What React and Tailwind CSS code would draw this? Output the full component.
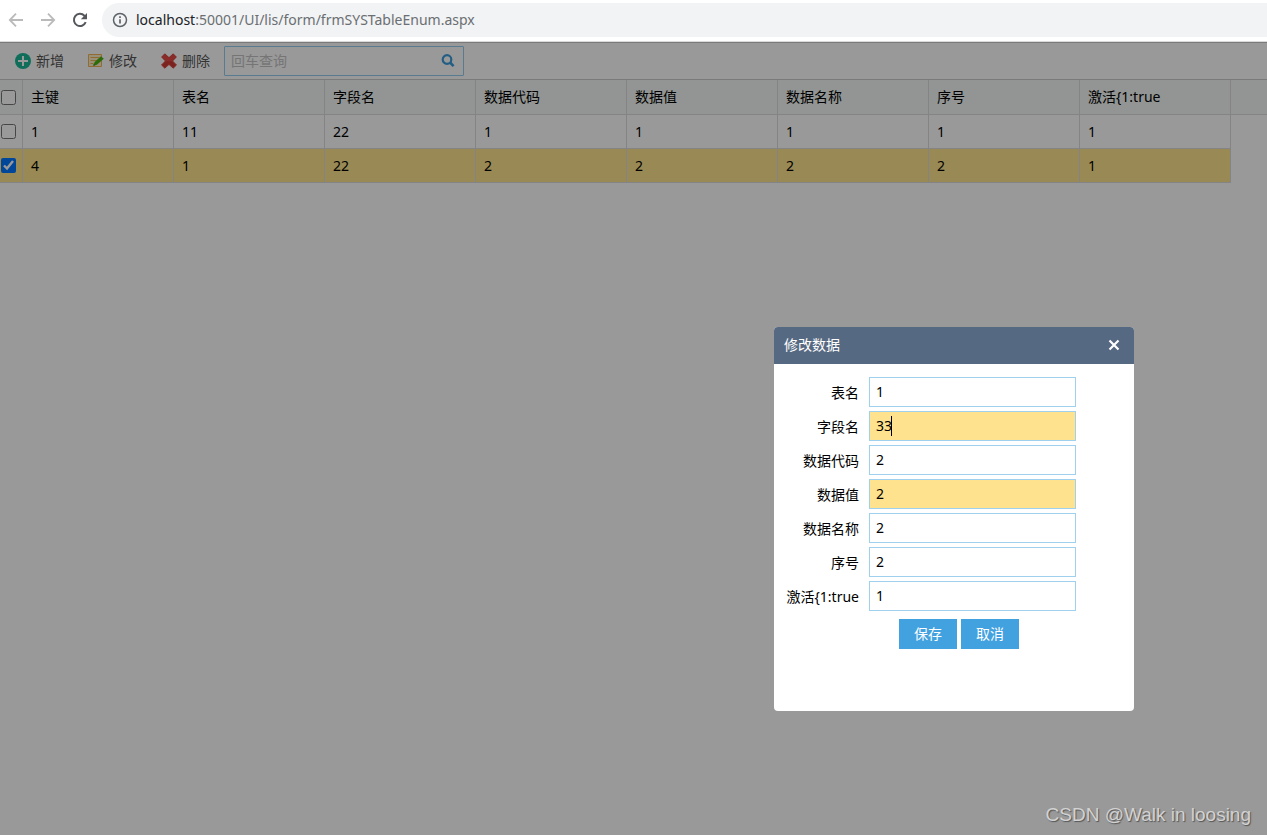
import { useState } from "react";

const columns = ["主键", "表名", "字段名", "数据代码", "数据值", "数据名称", "序号", "激活{1:true"];

const rows = [
  { selected: false, cells: ["1", "11", "22", "1", "1", "1", "1", "1"] },
  { selected: true, cells: ["4", "1", "22", "2", "2", "2", "2", "1"] },
];

const fields = [
  { id: "tableName", label: "表名", value: "1" },
  { id: "fieldName", label: "字段名", value: "33", required: true, active: true },
  { id: "dataCode", label: "数据代码", value: "2" },
  { id: "dataValue", label: "数据值", value: "2", required: true },
  { id: "dataName", label: "数据名称", value: "2" },
  { id: "sequence", label: "序号", value: "2" },
  { id: "enabled", label: "激活{1:true", value: "1" },
];

function AddIcon() {
  return (
    <svg width="16" height="16" viewBox="0 0 16 16" aria-hidden="true">
      <circle cx="8" cy="8" r="8" fill="#18b796" />
      <path d="M8 3v10M3 8h10" stroke="#fff" strokeWidth="2" />
    </svg>
  );
}

function EditIcon() {
  return (
    <svg width="16" height="16" viewBox="0 0 16 16" aria-hidden="true">
      <path d="M.5 1.500h13v12H.5z" fill="#fff0cc" stroke="#f0b455" />
      <path d="M2.500 4.500h9M2.500 7.500h6M2.500 10.500h3" stroke="#f0b455" />
      <path d="M5.200 12.800l1.400-3.900L13 3.200l2.800 2.500-6.900 6.100z" fill="#4bb512" />
      <path d="M5.200 12.800l.7-1.900 1.500 1.300z" fill="#3f7d1c" />
    </svg>
  );
}

function DeleteIcon() {
  return (
    <svg width="16" height="16" viewBox="0 0 16 16" aria-hidden="true">
      <path
        d="M3.800.8L8 4.600l4.200-3.800 3.200 3.200L11.600 8l3.900 4-3.300 3.200L8 11.400l-4.200 3.800L.5 12l3.900-4L.6 4z"
        fill="#e64a42"
        stroke="#c93a34"
        strokeWidth=".8"
      />
      <path d="M1.400 12L5 8.300h6l3.600 3.700-2.400 2.400L8 10.500l-4.200 3.900z" fill="#cf3a35" />
    </svg>
  );
}

function BrowserBar() {
  return (
    <header className="flex h-[42px] shrink-0 items-start border-b border-[#dadada] bg-white pt-[3px]">
      <nav className="flex h-[34px] w-[102px] shrink-0 items-center gap-4 pl-2">
        <button type="button" aria-label="Back" className="text-[#bababa]">
          <svg width="16" height="16" viewBox="0 0 16 16" fill="none" stroke="currentColor" strokeWidth="1.8">
            <path d="M15 8H2M8 1.600L1.800 8 8 14.400" />
          </svg>
        </button>
        <button type="button" aria-label="Forward" className="text-[#bababa]">
          <svg width="16" height="16" viewBox="0 0 16 16" fill="none" stroke="currentColor" strokeWidth="1.8">
            <path d="M1 8h13M8 1.600L14.200 8 8 14.400" />
          </svg>
        </button>
        <button type="button" aria-label="Reload" className="text-[#54575b]">
          <svg width="16" height="16" viewBox="0 0 16 16" fill="none">
            <path d="M13.700 10.200A6.100 6.100 0 1 1 12.400 3.700L14 5.300" stroke="currentColor" strokeWidth="2" />
            <path d="M15 1v6.200H8.800z" fill="currentColor" />
          </svg>
        </button>
      </nav>
      <div className="flex h-[34px] flex-1 items-center gap-2 rounded-l-full bg-[#f1f3f4] pl-[10px]">
        <svg width="16" height="16" viewBox="0 0 16 16" fill="none" stroke="#5f6368" aria-hidden="true">
          <circle cx="8" cy="8" r="6.500" strokeWidth="1.500" />
          <path d="M8 7.200v4.300M8 4.300v1.700" strokeWidth="1.700" />
        </svg>
        <div className="text-sm text-[#6b6e72]">
          <span className="text-[#202124]">localhost</span>:50001/UI/lis/form/frmSYSTableEnum.aspx
        </div>
      </div>
    </header>
  );
}

function Toolbar() {
  return (
    <div className="flex h-[38px] items-center border-y border-[#cccccc] bg-white pl-[15px] text-[#555]">
      <button type="button" className="mr-6 flex items-center gap-[5px]">
        <AddIcon />
        新增
      </button>
      <button type="button" className="mr-6 flex items-center gap-[5px]">
        <EditIcon />
        修改
      </button>
      <button type="button" className="mr-[14px] flex items-center gap-[5px]">
        <DeleteIcon />
        删除
      </button>
      <label className="flex h-[30px] w-60 items-center rounded-[1px] border border-[#95cdee] bg-white pr-2 pl-[6px]">
        <input
          type="text"
          aria-label="回车查询"
          placeholder="回车查询"
          className="min-w-0 flex-1 bg-transparent outline-none placeholder:text-[#c4c4c4]"
        />
        <svg width="14" height="14" viewBox="0 0 14 14" fill="none" stroke="#3d9cdd" aria-hidden="true">
          <circle cx="6" cy="5.500" r="4.300" strokeWidth="2.200" />
          <path d="M9 8.500l3.600 3.600" strokeWidth="2.600" />
        </svg>
      </label>
    </div>
  );
}

function Check({ label, checked, onChange }) {
  return (
    <input
      type="checkbox"
      aria-label={label}
      checked={checked}
      onChange={onChange}
      className="ml-px block size-[15px] accent-[#0075ff]"
    />
  );
}

function DataGrid() {
  const [selected, setSelected] = useState(rows.map((row) => row.selected));
  const all = selected.every(Boolean);
  return (
    <table className="w-full table-fixed border-separate border-spacing-0 text-left">
      <colgroup>
        <col className="w-[23px]" />
        {columns.map((name) => (
          <col key={name} className="w-[151px]" />
        ))}
        <col />
      </colgroup>
      <thead className="bg-[#f3f8f5]">
        <tr className="h-[35px]">
          <th className="border-r border-b border-[#dcdcdc] p-0">
            <Check label="全选" checked={all} onChange={() => setSelected(selected.map(() => !all))} />
          </th>
          {columns.map((name) => (
            <th key={name} scope="col" className="border-r border-b border-[#dcdcdc] px-2 py-0 font-normal">
              {name}
            </th>
          ))}
          <td className="border-b border-[#dcdcdc] p-0" />
        </tr>
      </thead>
      <tbody>
        {rows.map((row, i) => (
          <tr key={row.cells[0]} className="h-[34px]">
            <td className={`border-r border-b border-[#dcdcdc] p-0 ${selected[i] ? "bg-[#ffe48d]" : ""}`}>
              <Check
                label={`选择 ${row.cells[0]}`}
                checked={selected[i]}
                onChange={() => setSelected(selected.map((s, j) => (j === i ? !s : s)))}
              />
            </td>
            {row.cells.map((cell, j) => (
              <td
                key={columns[j]}
                className={`border-r border-b border-[#dcdcdc] px-2 py-0 ${selected[i] ? "bg-[#ffe48d]" : ""}`}
              >
                {cell}
              </td>
            ))}
            <td className="p-0" />
          </tr>
        ))}
      </tbody>
    </table>
  );
}

function Field({ id, label, value, required, active }) {
  return (
    <div className="flex items-center gap-[10px]">
      <label htmlFor={id} className="w-[85px] pt-[2px] text-right">
        {label}
      </label>
      <div className="relative">
        <input
          id={id}
          type="text"
          defaultValue={value}
          className={`block h-[30px] w-[207px] border border-[#9fd1ef] px-[6px] pb-[2px] outline-none ${
            required ? "bg-[#ffe28d]" : "bg-white"
          }`}
        />
        {active && <span className="absolute top-[5px] left-[22px] h-5 w-px bg-black" />}
      </div>
    </div>
  );
}

function EditDialog() {
  return (
    <section
      role="dialog"
      aria-labelledby="dialog-title"
      className="absolute top-[285px] left-[774px] w-[360px] overflow-hidden rounded bg-white"
    >
      <div className="flex h-[37px] items-center justify-between bg-[#566982] pr-[14px] pb-[2px] pl-[10px] text-white">
        <h2 id="dialog-title">修改数据</h2>
        <button type="button" aria-label="关闭">
          <svg width="12" height="12" viewBox="0 0 12 12" fill="none" stroke="currentColor" strokeWidth="2.200">
            <path d="M1.500 1.500l9 9M10.500 1.500l-9 9" />
          </svg>
        </button>
      </div>
      <form className="pt-[13px] pb-[62px]" onSubmit={(e) => e.preventDefault()}>
        <div className="flex flex-col gap-1">
          {fields.map((field) => (
            <Field key={field.id} {...field} />
          ))}
        </div>
        <div className="mt-2 flex gap-1 pl-[125px]">
          <button type="submit" className="h-[30px] w-[58px] bg-[#42a1df] text-white">
            保存
          </button>
          <button type="button" className="h-[30px] w-[58px] bg-[#42a1df] text-white">
            取消
          </button>
        </div>
      </form>
    </section>
  );
}

export default function App() {
  return (
    <div className="flex min-h-screen flex-col bg-white font-['Noto_Sans','Noto_Sans_CJK_SC',sans-serif] text-sm text-black">
      <BrowserBar />
      <main className="relative flex-1">
        <Toolbar />
        <DataGrid />
        <div className="absolute inset-0 bg-black/40" />
        <EditDialog />
        <p className="absolute right-4 bottom-2 font-['Liberation_Sans',sans-serif] text-[19px] leading-6 text-[#d2d2d2] [text-shadow:1px_1px_1px_#555]">
          CSDN @Walk in loosing
        </p>
      </main>
    </div>
  );
}
